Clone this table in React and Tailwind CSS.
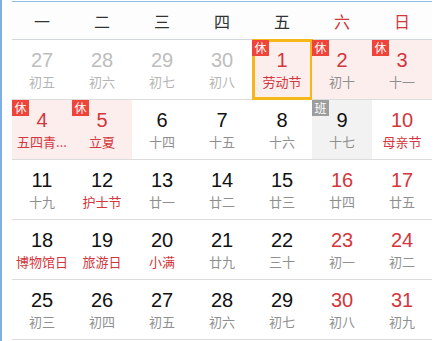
import React from 'react';

const weekdays = ['一', '二', '三', '四', '五', '六', '日'];

// kind: prev (last month), rest (休), work (班)
const weeks = [
  [
    { d: 27, l: '初五', prev: true },
    { d: 28, l: '初六', prev: true },
    { d: 29, l: '初七', prev: true },
    { d: 30, l: '初八', prev: true },
    { d: 1, l: '劳动节', rest: true, fest: true, red: true, today: true },
    { d: 2, l: '初十', rest: true, red: true },
    { d: 3, l: '十一', rest: true, red: true },
  ],
  [
    { d: 4, l: '五四青...', rest: true, fest: true, red: true },
    { d: 5, l: '立夏', rest: true, fest: true, red: true },
    { d: 6, l: '十四' },
    { d: 7, l: '十五' },
    { d: 8, l: '十六' },
    { d: 9, l: '十七', work: true },
    { d: 10, l: '母亲节', fest: true, red: true },
  ],
  [
    { d: 11, l: '十九' },
    { d: 12, l: '护士节', fest: true },
    { d: 13, l: '廿一' },
    { d: 14, l: '廿二' },
    { d: 15, l: '廿三' },
    { d: 16, l: '廿四', red: true },
    { d: 17, l: '廿五', red: true },
  ],
  [
    { d: 18, l: '博物馆日', fest: true },
    { d: 19, l: '旅游日', fest: true },
    { d: 20, l: '小满', fest: true },
    { d: 21, l: '廿九' },
    { d: 22, l: '三十' },
    { d: 23, l: '初一', red: true },
    { d: 24, l: '初二', red: true },
  ],
  [
    { d: 25, l: '初三' },
    { d: 26, l: '初四' },
    { d: 27, l: '初五' },
    { d: 28, l: '初六' },
    { d: 29, l: '初七' },
    { d: 30, l: '初八', red: true },
    { d: 31, l: '初九', red: true },
  ],
];

const Cell = ({ c }) => {
  const bg = c.rest ? 'bg-[#fdeeee]' : c.work ? 'bg-[#f2f2f2]' : 'bg-white';
  const num = c.prev ? 'text-[#bdbdbd]' : c.red ? 'text-[#d3363c]' : 'text-[#111]';
  const lunar = c.prev ? 'text-[#b5b5b5]' : c.fest ? 'text-[#d3363c]' : 'text-[#8f8f8f]';
  return (
    <div className={`relative h-[60px] border-b border-[#dcdcdc] ${bg} flex flex-col items-center pt-[8px]`}>
      {c.today && (
        <div className="absolute -top-px left-0 -right-px -bottom-px border-[3px] border-[#f6b71b]"></div>
      )}
      {c.rest && (
        <span className="absolute left-0 top-0 z-10 w-[17px] h-[16px] bg-[#f0433a] text-white text-[12px] leading-[16px] text-center">休</span>
      )}
      {c.work && (
        <span className="absolute left-0 top-0 z-10 w-[17px] h-[16px] bg-[#9d9d9d] text-white text-[12px] leading-[16px] text-center">班</span>
      )}
      <span className={`text-[20px] leading-[24px] font-['Liberation_Sans',sans-serif] ${num}`}>{c.d}</span>
      <span className={`mt-[2px] text-[13px] leading-[16px] whitespace-nowrap ${lunar}`}>{c.l}</span>
    </div>
  );
};

export default function App() {
  return (
    <div className="w-[441px] h-[341px] bg-white border-l-2 border-[#7dafe2] pl-[10px] overflow-hidden font-['Noto_Sans_CJK_SC',sans-serif]">
      <div className="w-[420px] mt-px border-t border-[#8fbbe7]">
        <div className="grid grid-cols-7 h-[38px] border-b border-[#d4d8de] bg-[#fdfdfd]">
          {weekdays.map((w, i) => (
            <div key={w} className={`flex items-center justify-center text-[16px] ${i >= 5 ? 'text-[#d3363c]' : 'text-[#333]'}`}>
              {w}
            </div>
          ))}
        </div>
        {weeks.map((wk, i) => (
          <div key={i} className="grid grid-cols-7">
            {wk.map((c, j) => (
              <Cell key={j} c={c} />
            ))}
          </div>
        ))}
      </div>
    </div>
  );
}
